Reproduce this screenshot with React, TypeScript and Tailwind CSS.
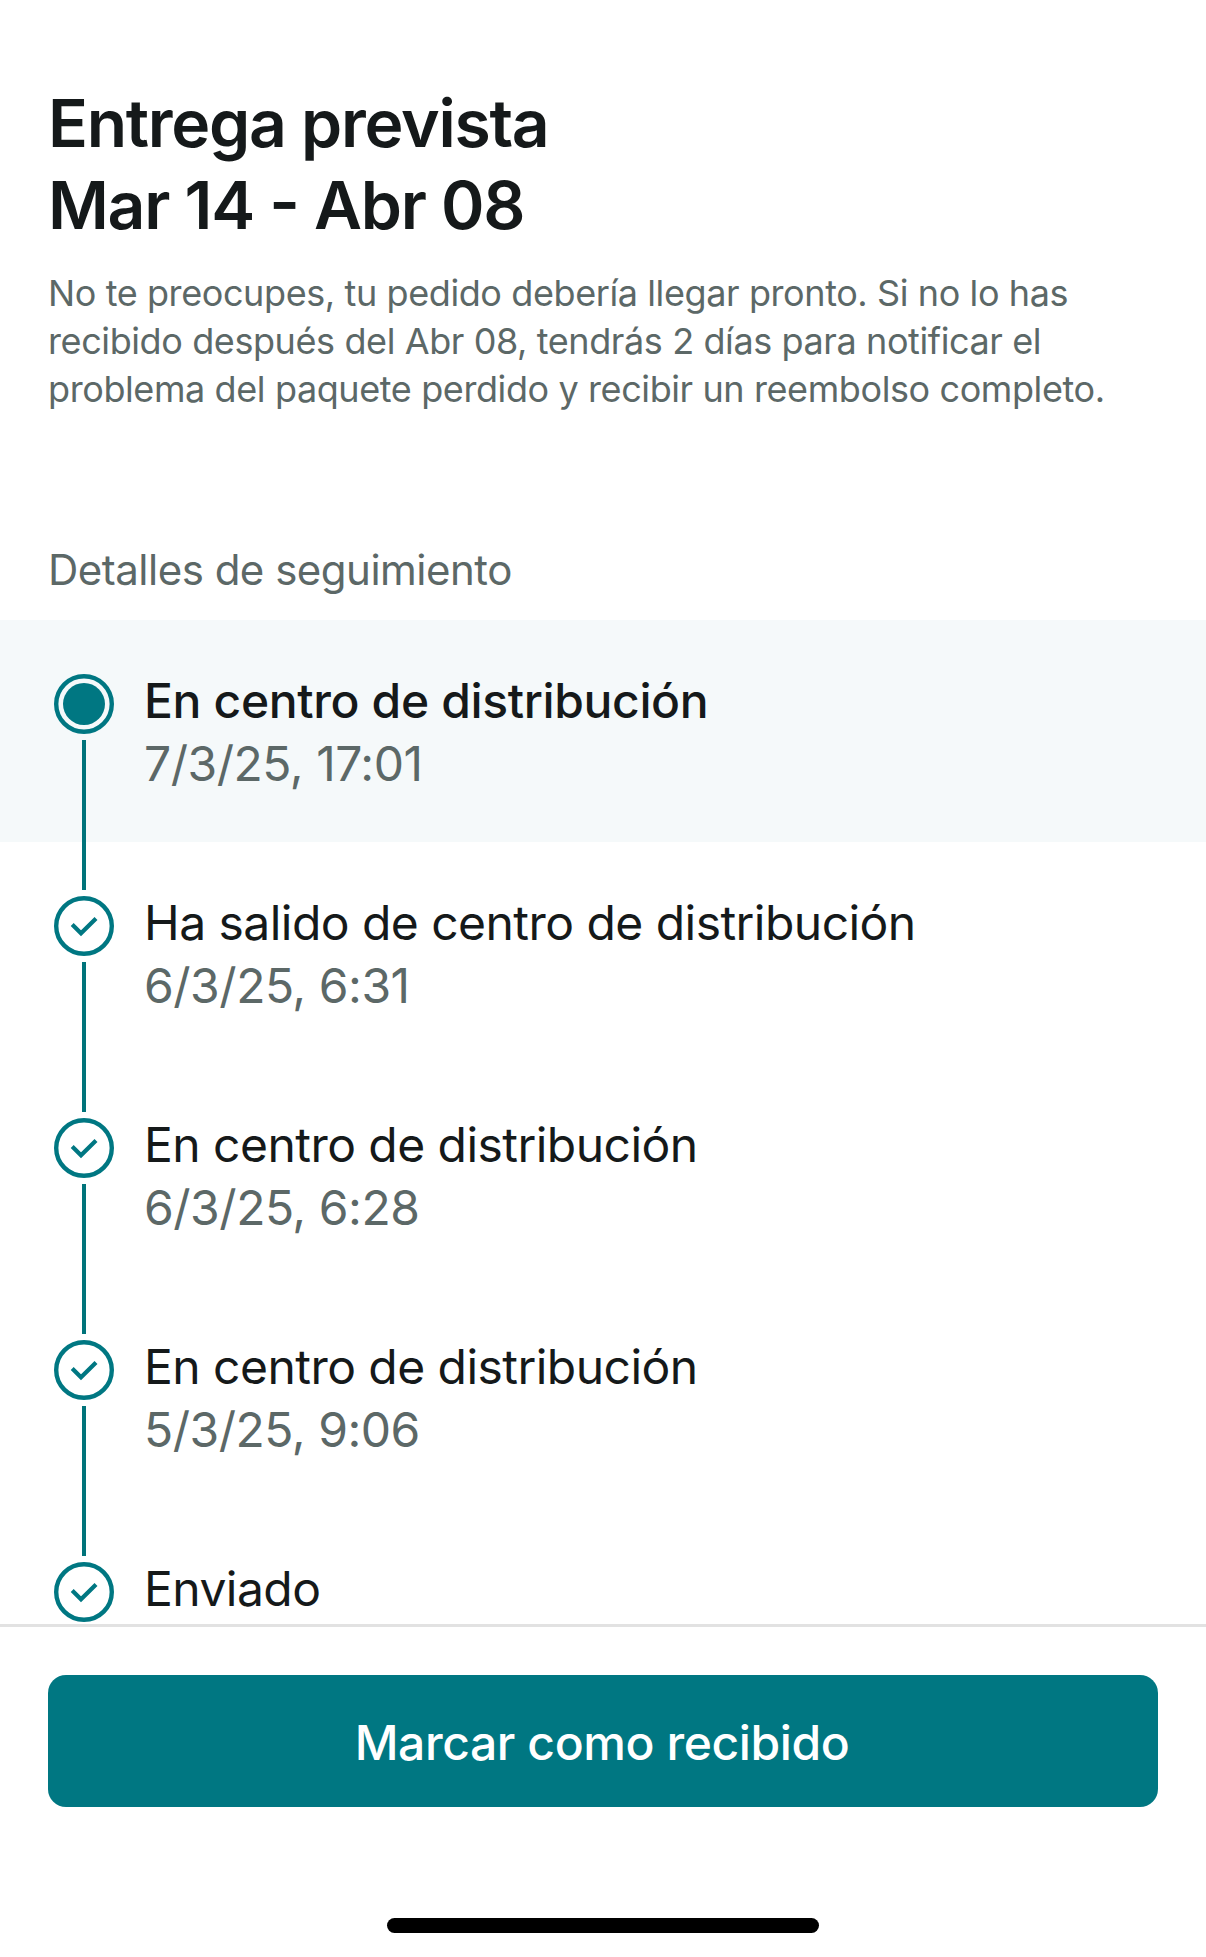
import React from "react";

const events = [
  { title: "En centro de distribución", date: "7/3/25, 17:01", current: true },
  { title: "Ha salido de centro de distribución", date: "6/3/25, 6:31" },
  { title: "En centro de distribución", date: "6/3/25, 6:28" },
  { title: "En centro de distribución", date: "5/3/25, 9:06" },
  { title: "Enviado", date: "" },
];

function Marker({ current }: { current?: boolean }) {
  return (
    <svg width="60" height="60" viewBox="0 0 60 60" fill="none" className="block shrink-0">
      <circle cx="30" cy="30" r="27.8" stroke="#007782" strokeWidth="4.4" />
      {current ? (
        <circle cx="30" cy="30" r="21" fill="#007782" />
      ) : (
        <path d="M18.2 28.6L27 37.3L42 22.4" stroke="#007782" strokeWidth="4.2" />
      )}
    </svg>
  );
}

export default function App() {
  return (
    <div className="flex h-[1957px] w-[1206px] flex-col overflow-hidden bg-white font-['Inter',sans-serif] text-[#15191a]">
      <main className="h-[1624px] shrink-0 overflow-hidden">
        <header className="px-12 pt-[82px]">
          <h1 className="text-[66px] leading-[82px] font-semibold tracking-[-1.27px] [font-feature-settings:'case']">
            Entrega prevista
            <br />
            Mar 14 - Abr 08
          </h1>
          <p className="mt-[23px] text-[36px] leading-[48px] tracking-[-0.4px] whitespace-nowrap text-[#5c6867]">
            No te preocupes, tu pedido debería llegar pronto. Si no lo has
            <br />
            recibido después del Abr 08, tendrás 2 días para notificar el
            <br />
            problema del paquete perdido y recibir un reembolso completo.
          </p>
        </header>
        <h2 className="mt-[130px] px-12 text-[42px] leading-[54px] tracking-[-0.5px] text-[#5c6867]">
          Detalles de seguimiento
        </h2>
        <ol className="mt-[23px]">
          {events.map((e, i) => (
            <li key={i} className={"flex h-[222px] gap-[30px] pl-[54px] " + (e.current ? "bg-[#f5f9fa]" : "")}>
              <div className="flex h-[270px] shrink-0 flex-col items-center pt-[54px]">
                <Marker current={e.current} />
                {i < 4 && <div className="mt-[6px] h-[150px] w-1 shrink-0 bg-[#00737a]" />}
              </div>
              <div className="pt-[49px] text-[48px] leading-[63px] tracking-[-0.54px]">
                <div className={e.current ? "font-medium tracking-[-0.36px]" : ""}>{e.title}</div>
                <div className="tracking-[-0.47px] text-[#5c6867]">{e.date}</div>
              </div>
            </li>
          ))}
        </ol>
      </main>
      <footer className="flex flex-1 flex-col items-center border-t-3 border-[#e2e2e2] px-12 pt-12">
        <button className="h-[132px] w-full rounded-[18px] bg-[#007782] pt-[3px] pr-[2px] text-[48px] font-medium tracking-[-0.4px] text-white">
          Marcar como recibido
        </button>
        <div className="mt-[111px] h-[15px] w-[432px] rounded-full bg-black" />
      </footer>
    </div>
  );
}
